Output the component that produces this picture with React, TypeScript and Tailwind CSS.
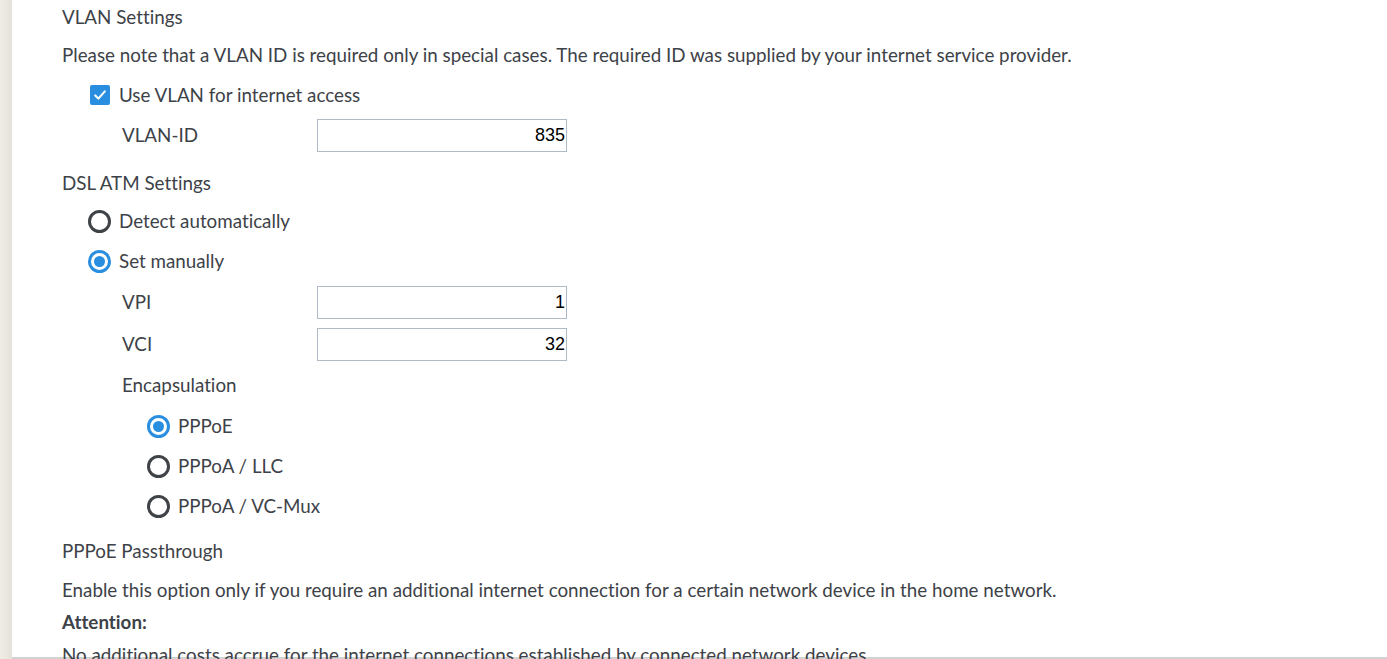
import React from 'react'

const font = { fontFamily: 'Lato, "Open Sans", sans-serif' }

function Radio({ checked, label }: { checked?: boolean; label: string }) {
  return (
    <label className="flex h-10 items-center gap-2">
      {checked ? (
        <span className="flex size-[23px] items-center justify-center rounded-full border-[3px] border-[#2a8ee0]">
          <span className="size-[11px] rounded-full bg-[#2a8ee0]" />
        </span>
      ) : (
        <span className="size-[23px] rounded-full border-[3px] border-[#3f4347]" />
      )}
      <span>{label}</span>
    </label>
  )
}

function Field({ label, value }: { label: string; value: string }) {
  return (
    <div className="flex h-[42px] items-center">
      <span className="w-[195px]">{label}</span>
      <div className="flex h-[33px] w-[250px] items-center justify-end border border-[#aebac5] bg-white px-[1px] font-['Liberation_Sans',Arial,sans-serif] text-[18px] text-black">
        {value}
      </div>
    </div>
  )
}

export default function App() {
  return (
    <div className="flex h-[659px] w-full overflow-hidden bg-white text-[18.8px] text-[#3d4248] [font-variant-ligatures:none]" style={font}>
      <div className="w-3 shrink-0 bg-gradient-to-r from-[#efece6] to-[#e6e2da]" />
      <div className="flex-1 border-b-2 border-[#d2d2d2]">
        <div className="pl-[50px]">
          <div className="flex h-[34px] items-center">VLAN Settings</div>
          <p className="flex h-[42px] items-center">
            Please note that a VLAN ID is required only in special cases. The required ID was supplied by your internet service provider.
          </p>
          <div className="pl-7">
            <label className="flex h-[38px] items-center gap-[9px]">
              <span className="flex size-5 items-center justify-center rounded-[2px] bg-[#2a8ee0]">
                <svg viewBox="0 0 20 20" className="size-4" fill="none" stroke="white" strokeWidth="2.6" strokeLinecap="round" strokeLinejoin="round">
                  <path d="M4 10.5l4 4 8-9" />
                </svg>
              </span>
              <span>Use VLAN for internet access</span>
            </label>
            <div className="pl-8">
              <Field label="VLAN-ID" value="835" />
            </div>
          </div>
          <div className="flex h-[45px] items-end pb-1">DSL ATM Settings</div>
          <div className="pl-[26px]">
            <Radio label="Detect automatically" />
            <Radio checked label="Set manually" />
            <div className="pl-[34px]">
              <Field label="VPI" value="1" />
              <Field label="VCI" value="32" />
              <div className="flex h-[41px] items-center">Encapsulation</div>
              <div className="pl-[25px]">
                <Radio checked label="PPPoE" />
                <Radio label="PPPoA / LLC" />
                <Radio label="PPPoA / VC-Mux" />
              </div>
            </div>
          </div>
          <div className="flex h-[51px] items-center">PPPoE Passthrough</div>
          <p className="flex h-[26px] items-center">
            Enable this option only if you require an additional internet connection for a certain network device in the home network.
          </p>
          <p className="flex h-[38px] items-center font-bold">Attention:</p>
          <p className="flex h-[28px] items-center">
            No additional costs accrue for the internet connections established by connected network devices.
          </p>
        </div>
      </div>
    </div>
  )
}
